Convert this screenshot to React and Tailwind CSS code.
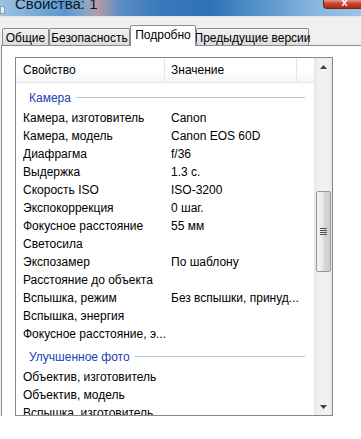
import React from 'react'

const cameraRows = [
  ['Камера, изготовитель', 'Canon'],
  ['Камера, модель', 'Canon EOS 60D'],
  ['Диафрагма', 'f/36'],
  ['Выдержка', '1.3 с.'],
  ['Скорость ISO', 'ISO-3200'],
  ['Экспокоррекция', '0 шаг.'],
  ['Фокусное расстояние', '55 мм'],
  ['Светосила', ''],
  ['Экспозамер', 'По шаблону'],
  ['Расстояние до объекта', ''],
  ['Вспышка, режим', 'Без вспышки, принуд...'],
  ['Вспышка, энергия', ''],
  ['Фокусное расстояние, э...', ''],
]

const photoRows = [
  ['Объектив, изготовитель', ''],
  ['Объектив, модель', ''],
  ['Вспышка, изготовитель', ''],
]

function Group({ title }) {
  return (
    <div className="flex items-center h-[25px] pt-[2px] pl-[13px] pr-[9px]">
      <span className="text-[#2140b8] whitespace-nowrap">{title}</span>
      <div className="flex-1 h-px bg-[#b8c4dc] ml-[5px]" />
    </div>
  )
}

function Row({ name, value }) {
  return (
    <div className="flex items-center h-[18px] pl-[7px] whitespace-nowrap">
      <span className="w-[148px] shrink-0 overflow-hidden">{name}</span>
      <span>{value}</span>
    </div>
  )
}

function Tab({ label, active, width }) {
  if (active) {
    return (
      <div
        className="h-[21px] -mb-px relative z-10 bg-white border border-b-0 border-[#898c95] flex items-center justify-center rounded-t-[2px] whitespace-nowrap shrink-0"
        style={{ width }}
      >
        <span className="-mt-[2px]">{label}</span>
      </div>
    )
  }
  return (
    <div
      className="h-[17px] bg-[linear-gradient(#f3f3f3,#e6e6e6_50%,#dcdcdc)] border border-b-0 border-[#898c95] flex items-center justify-center rounded-t-[2px] whitespace-nowrap shrink-0"
      style={{ width }}
    >
      <span className="mt-[1px]">{label}</span>
    </div>
  )
}

export default function App() {
  return (
    <div className="w-[361px] h-[439px] bg-white overflow-hidden relative text-[12px] text-black font-['Liberation_Sans',Arial,sans-serif]">
      {/* title bar */}
      <div className="h-[16px] relative overflow-hidden bg-[linear-gradient(90deg,#9fc3e3_0%,#7eb0dc_8%,#5b97cf_18%,#8aa6c8_24%,#b99aa6_27%,#5d8fc6_33%,#3778b9_45%,#2f72b4_58%,#5f9ad0_75%,#8ab8de_88%,#9cc3e4_100%)]">
        <div className="absolute left-0 top-[6px] w-[5px] h-[8px] bg-[#e8eef5] border border-[#8aa0b8]" />
        <div className="pl-[15px] -mt-[5px] text-[15px] leading-[18px] text-[#101820] whitespace-nowrap">Свойства: 1</div>
        <div className="absolute right-0 top-0 w-[38px] h-[9px] rounded-bl-[4px] bg-[linear-gradient(#e49a8a,#c8432c_45%,#b02a16)] border-l border-b border-[#6b2a20] flex items-start justify-center">
          <span className="text-white text-[11px] font-bold leading-[8px] -mt-[2px] ml-[4px]">x</span>
        </div>
      </div>
      <div className="h-px bg-[#dfe7ef]" />

      {/* tabs */}
      <div className="bg-[#f0f0f0] h-[28px] flex items-end pl-[2px]">
        <Tab label="Общие" width={47} />
        <Tab label="Безопасность" width={81} />
        <Tab label="Подробно" active width={66} />
        <Tab label="Предыдущие версии" width={113} />
      </div>

      {/* panel */}
      <div className="flex bg-[#f0f0f0]">
        <div className="w-px" />
        <div className="flex-1 h-[371px] bg-white border-l border-t border-[#898c95] pl-[13px] pt-[11px]">
          <div className="w-[318px] h-[359px] border border-[#828790] flex">
            <div className="w-[298px] flex flex-col">
              <div className="h-[25px] shrink-0 flex border-b border-[#e5e5e5] bg-[linear-gradient(#ffffff,#ffffff_40%,#f5f6f7)]">
                <div className="w-[149px] border-r border-[#e3e5e8] flex items-center pl-[7px]">Свойство</div>
                <div className="w-[132px] border-r border-[#e3e5e8] flex items-center pl-[6px]">Значение</div>
                <div className="flex-1" />
              </div>
              <div className="flex-1 overflow-hidden pt-[1px]">
                <Group title="Камера" />
                {cameraRows.map(([n, v]) => (
                  <Row key={n} name={n} value={v} />
                ))}
                <Group title="Улучшенное фото" />
                {photoRows.map(([n, v]) => (
                  <Row key={n} name={n} value={v} />
                ))}
              </div>
            </div>
            {/* scrollbar */}
            <div className="w-[18px] bg-[linear-gradient(90deg,#e6e6e6,#f0f0f0_20%,#f2f2f2_80%,#e8e8e8)] flex flex-col items-center">
              <div className="h-[17px] w-full flex items-center justify-center shrink-0">
                <svg width="7" height="4" viewBox="0 0 7 4"><path d="M3.5 0L7 4H0z" fill="#404040" /></svg>
              </div>
              <div className="h-[116px] shrink-0" />
              <div className="w-[15px] h-[81px] shrink-0 rounded-[2px] border border-[#979797] bg-[linear-gradient(90deg,#f4f4f4,#e8e8e8_45%,#d6d6d6_55%,#cfcfcf)] flex flex-col items-center justify-center gap-[1px]">
                {[0, 1, 2, 3].map((i) => (
                  <div key={i} className="w-[7px] h-[1px] bg-[#555]" />
                ))}
              </div>
              <div className="flex-1" />
              <div className="h-[17px] w-full flex items-center justify-center shrink-0">
                <svg width="7" height="4" viewBox="0 0 7 4"><path d="M0 0H7L3.5 4z" fill="#404040" /></svg>
              </div>
            </div>
          </div>
        </div>
      </div>
    </div>
  )
}
